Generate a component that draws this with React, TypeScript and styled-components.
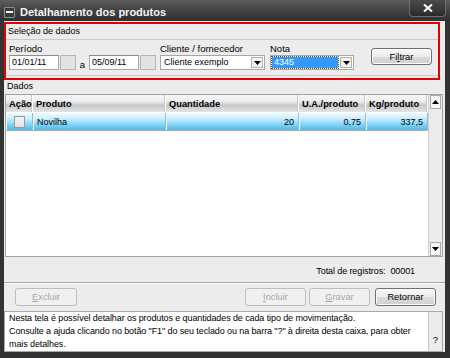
import React from 'react'
import styled, { createGlobalStyle } from 'styled-components'

const GlobalStyle = createGlobalStyle`
  html, body {
    margin: 0;
    padding: 0;
    background: #ffffff;
  }
  body {
    font-family: "Liberation Sans", Arial, sans-serif;
    font-size: 9px;
    color: #000;
  }
  * { box-sizing: border-box; }
`

const Window = styled.div`
  width: 450px;
  height: 358px;
  display: flex;
  flex-direction: column;
  background: #333333;
`

const TitleBar = styled.div`
  height: 21px;
  flex: none;
  display: flex;
  align-items: center;
  padding-left: 4px;
  background: linear-gradient(#5e5e5e 0%, #444444 45%, #2f2f2f 100%);
  position: relative;
`

const MinimizeIcon = styled.span`
  width: 11px;
  height: 11px;
  margin-top: 3px;
  border: 1px solid #8e8e8e;
  border-radius: 1px;
  background: #3a3a3a;
  display: flex;
  align-items: center;
  justify-content: center;
  &::after {
    content: '';
    width: 7px;
    height: 2px;
    background: #f2f2f2;
  }
`

const TitleText = styled.span`
  margin-left: 5px;
  margin-top: 3px;
  font-size: 11px;
  font-weight: bold;
  color: #f4f4f4;
`

const CloseButton = styled.div`
  position: absolute;
  right: 4px;
  top: 0;
  width: 37px;
  height: 17px;
  border: 1px solid #6e6e6e;
  border-top: none;
  border-radius: 0 0 4px 4px;
  background: linear-gradient(#4a4a4a, #2a2a2a);
  display: flex;
  align-items: center;
  justify-content: center;
`

const Frame = styled.div`
  flex: 1;
  min-height: 0;
  display: flex;
  padding: 0 5px 6px 4px;
`

const Body = styled.div`
  flex: 1;
  min-height: 0;
  overflow: hidden;
  display: flex;
  flex-direction: column;
  background: #ececec;
`

const RedBox = styled.div`
  margin: 1px 5px 0 0;
  border: 2px solid #e20000;
  display: flex;
  flex-direction: column;
`

const GroupTitle = styled.div`
  height: 16px;
  line-height: 15px;
  padding-left: 2px;
  border-bottom: 1px solid #cacaca;
`

const FieldsRow = styled.div`
  display: flex;
  align-items: flex-start;
  padding: 3px 0 5px 3px;
  margin-bottom: 2px;
  border-bottom: 1px solid #cacaca;
`

const Field = styled.div<{ $gap?: number }>`
  display: flex;
  flex-direction: column;
  margin-left: ${p => p.$gap || 0}px;
`

const Label = styled.div`
  height: 12px;
  line-height: 11px;
  font-size: 9.5px;
`

const Inline = styled.div`
  display: flex;
  align-items: center;
`

const TextInput = styled.div<{ $w: number }>`
  width: ${p => p.$w}px;
  height: 15px;
  line-height: 13px;
  padding-left: 2px;
  background: #fff;
  border: 1px solid #a7a7a7;
  border-top-color: #8c8c8c;
`

const SideBox = styled.div`
  width: 16px;
  height: 15px;
  margin-left: 1px;
  background: #e2e2e2;
  border: 1px solid #b4b4b4;
`

const Between = styled.span`
  width: 13px;
  text-align: center;
  padding-top: 3px;
  font-size: 9.5px;
`

const Combo = styled.div<{ $w: number }>`
  width: ${p => p.$w}px;
  height: 15px;
  display: flex;
  padding: 1px;
  background: #fff;
  border: 1px solid #a7a7a7;
`

const ComboField = styled.div<{ $selected?: boolean }>`
  flex: 1;
  line-height: 11px;
  padding-left: 2px;
  color: ${p => (p.$selected ? '#fff' : '#000')};
  background: ${p => (p.$selected ? '#3399ff' : '#fff')};
  outline: ${p => (p.$selected ? '1px dotted #6b4a00' : 'none')};
`

const ComboButton = styled.div`
  width: 12px;
  margin-left: 2px;
  display: flex;
  align-items: center;
  justify-content: center;
  background: #f3f3f3;
  border: 1px solid #b0b0b0;
`

const PushButton = styled.div<{ $disabled?: boolean; $w?: number }>`
  width: ${p => p.$w || 61}px;
  height: 18px;
  display: flex;
  align-items: center;
  justify-content: center;
  border-radius: 3px;
  border: 1px solid ${p => (p.$disabled ? '#bdbdbd' : '#707070')};
  color: ${p => (p.$disabled ? '#a6a6a6' : '#000')};
  background: ${p =>
    p.$disabled ? '#f0f0f0' : 'linear-gradient(#f8f8f8 0%, #ececec 50%, #dcdcdc 51%, #cfcfcf 100%)'};
  box-shadow: ${p => (p.$disabled ? 'none' : 'inset 0 0 0 1px #fcfcfc')};
  font-size: 9.3px;
`

const FilterButton = styled(PushButton)`
  height: 17px;
  margin: 5px 0 0 17px;
`

const SectionLabel = styled.div`
  height: 14px;
  line-height: 13px;
  padding-left: 3px;
`

const Table = styled.div`
  height: 163px;
  flex: none;
  margin: 0 2px 0 1px;
  border: 1px solid #a3a3a3;
  background: #fff;
  display: flex;
`

const Grid = styled.div`
  flex: 1;
  display: grid;
  grid-template-columns: 27px 133px 133px 67px 62px;
  grid-auto-rows: 18px;
  align-content: start;
`

const HeadCell = styled.div`
  display: flex;
  align-items: center;
  padding-left: 3px;
  font-weight: bold;
  font-size: 9.3px;
  height: 17px;
  background: linear-gradient(#f7f7f7 0%, #eeeeee 35%, #c6c8ca 62%, #e4e4e4 100%);
  border-right: 1px solid #ffffff;
  box-shadow: inset -1px 0 #c6c6c6;
`

const RowCell = styled.div<{ $right?: boolean; $center?: boolean }>`
  display: flex;
  align-items: center;
  justify-content: ${p => (p.$center ? 'center' : p.$right ? 'flex-end' : 'flex-start')};
  padding: 0 4px 0 4px;
  background: linear-gradient(#effaff 0%, #c8edfd 35%, #7fd2f6 70%, #4fb9ec 100%);
  border-right: 1px solid #9fb8c4;
  border-bottom: 1px solid #a8b4ba;
  box-shadow: inset 1px 0 #eaf8ff;
`

const CheckBox = styled.div`
  width: 11px;
  height: 12px;
  border: 1px solid #9a9a9a;
  background: linear-gradient(#f4f4f4, #e2e2e2);
`

const ScrollBar = styled.div`
  width: 14px;
  display: flex;
  flex-direction: column;
  justify-content: space-between;
  background: #ebebeb;
  border-left: 1px solid #d0d0d0;
  padding: 0 1px 0 1px;
`

const ScrollButton = styled.div`
  height: 14px;
  display: flex;
  align-items: center;
  justify-content: center;
  background: #f4f4f4;
  border: 1px solid #a9a9a9;
`

const TotalBar = styled.div`
  height: 26px;
  flex: none;
  display: flex;
  align-items: center;
  justify-content: flex-end;
  padding: 2px 30px 0 0;
  border-bottom: 1px solid #a9a9a9;
  font-size: 9px;
  letter-spacing: -0.1px;
`

const TotalValue = styled.span`
  margin-left: 5px;
`

const ButtonBar = styled.div`
  flex: none;
  display: flex;
  align-items: center;
  padding: 4px 9px 5px 11px;
  border-top: 1px solid #fafafa;
`

const Spacer = styled.div`
  flex: 1;
`

const ButtonGap = styled.div<{ $w: number }>`
  width: ${p => p.$w}px;
`

const HelpBox = styled.div`
  flex: 1;
  min-height: 0;
  margin-right: 2px;
  display: flex;
  border: 1px solid #a9a9a9;
`

const HelpText = styled.div`
  flex: 1;
  background: #fff;
  padding: 0 0 0 4px;
  line-height: 13px;
  font-size: 9px;
  letter-spacing: -0.1px;
  white-space: nowrap;
  overflow: hidden;
`

const HelpSide = styled.div`
  width: 14px;
  display: flex;
  justify-content: center;
  padding-top: 22px;
  border-left: 1px solid #c4c4c4;
  background: #ececec;
  font-size: 9.5px;
`

const Down = () => (
  <svg width="7" height="4" viewBox="0 0 7 4">
    <path d="M0 0 H7 L3.5 4 Z" fill="#000" />
  </svg>
)

const Up = () => (
  <svg width="7" height="4" viewBox="0 0 7 4">
    <path d="M0 4 H7 L3.5 0 Z" fill="#000" />
  </svg>
)

const columns = ['Ação', 'Produto', 'Quantidade', 'U.A./produto', 'Kg/produto']

export default function App() {
  return (
    <>
      <GlobalStyle />
      <Window>
        <TitleBar>
          <MinimizeIcon />
          <TitleText>Detalhamento dos produtos</TitleText>
          <CloseButton>
            <svg width="10" height="8" viewBox="0 0 10 8">
              <path d="M1 0.5 L9 7.5 M9 0.5 L1 7.5" stroke="#ffffff" strokeWidth="2" />
            </svg>
          </CloseButton>
        </TitleBar>
        <Frame>
          <Body>
            <RedBox>
              <GroupTitle>Seleção de dados</GroupTitle>
              <FieldsRow>
                <Field>
                  <Label>Período</Label>
                  <Inline>
                    <TextInput $w={50}>01/01/11</TextInput>
                    <SideBox />
                    <Between>a</Between>
                    <TextInput $w={50}>05/09/11</TextInput>
                    <SideBox />
                  </Inline>
                </Field>
                <Field $gap={4}>
                  <Label>Cliente / fornecedor</Label>
                  <Combo $w={105}>
                    <ComboField>Cliente exemplo</ComboField>
                    <ComboButton>
                      <Down />
                    </ComboButton>
                  </Combo>
                </Field>
                <Field $gap={5}>
                  <Label>Nota</Label>
                  <Combo $w={84}>
                    <ComboField $selected>4345</ComboField>
                    <ComboButton>
                      <Down />
                    </ComboButton>
                  </Combo>
                </Field>
                <FilterButton>
                  Fi<u>l</u>trar
                </FilterButton>
              </FieldsRow>
            </RedBox>
            <SectionLabel>Dados</SectionLabel>
            <Table>
              <Grid>
                {columns.map(c => (
                  <HeadCell key={c}>{c}</HeadCell>
                ))}
                <RowCell $center>
                  <CheckBox />
                </RowCell>
                <RowCell>Novilha</RowCell>
                <RowCell $right>20</RowCell>
                <RowCell $right>0,75</RowCell>
                <RowCell $right>337,5</RowCell>
              </Grid>
              <ScrollBar>
                <ScrollButton>
                  <Up />
                </ScrollButton>
                <ScrollButton>
                  <Down />
                </ScrollButton>
              </ScrollBar>
            </Table>
            <TotalBar>
              Total de registros:<TotalValue>00001</TotalValue>
            </TotalBar>
            <ButtonBar>
              <PushButton $disabled $w={62}>
                <u>E</u>xcluir
              </PushButton>
              <Spacer />
              <PushButton $disabled>
                <u>I</u>ncluir
              </PushButton>
              <ButtonGap $w={3} />
              <PushButton $disabled>
                <u>G</u>ravar
              </PushButton>
              <ButtonGap $w={5} />
              <PushButton>Retornar</PushButton>
            </ButtonBar>
            <HelpBox>
              <HelpText>
                Nesta tela é possível detalhar os produtos e quantidades de cada tipo de movimentação.
                <br />
                Consulte a ajuda clicando no botão "F1" do seu teclado ou na barra "?" à direita desta caixa, para obter
                <br />
                mais detalhes.
              </HelpText>
              <HelpSide>?</HelpSide>
            </HelpBox>
          </Body>
        </Frame>
      </Window>
    </>
  )
}
